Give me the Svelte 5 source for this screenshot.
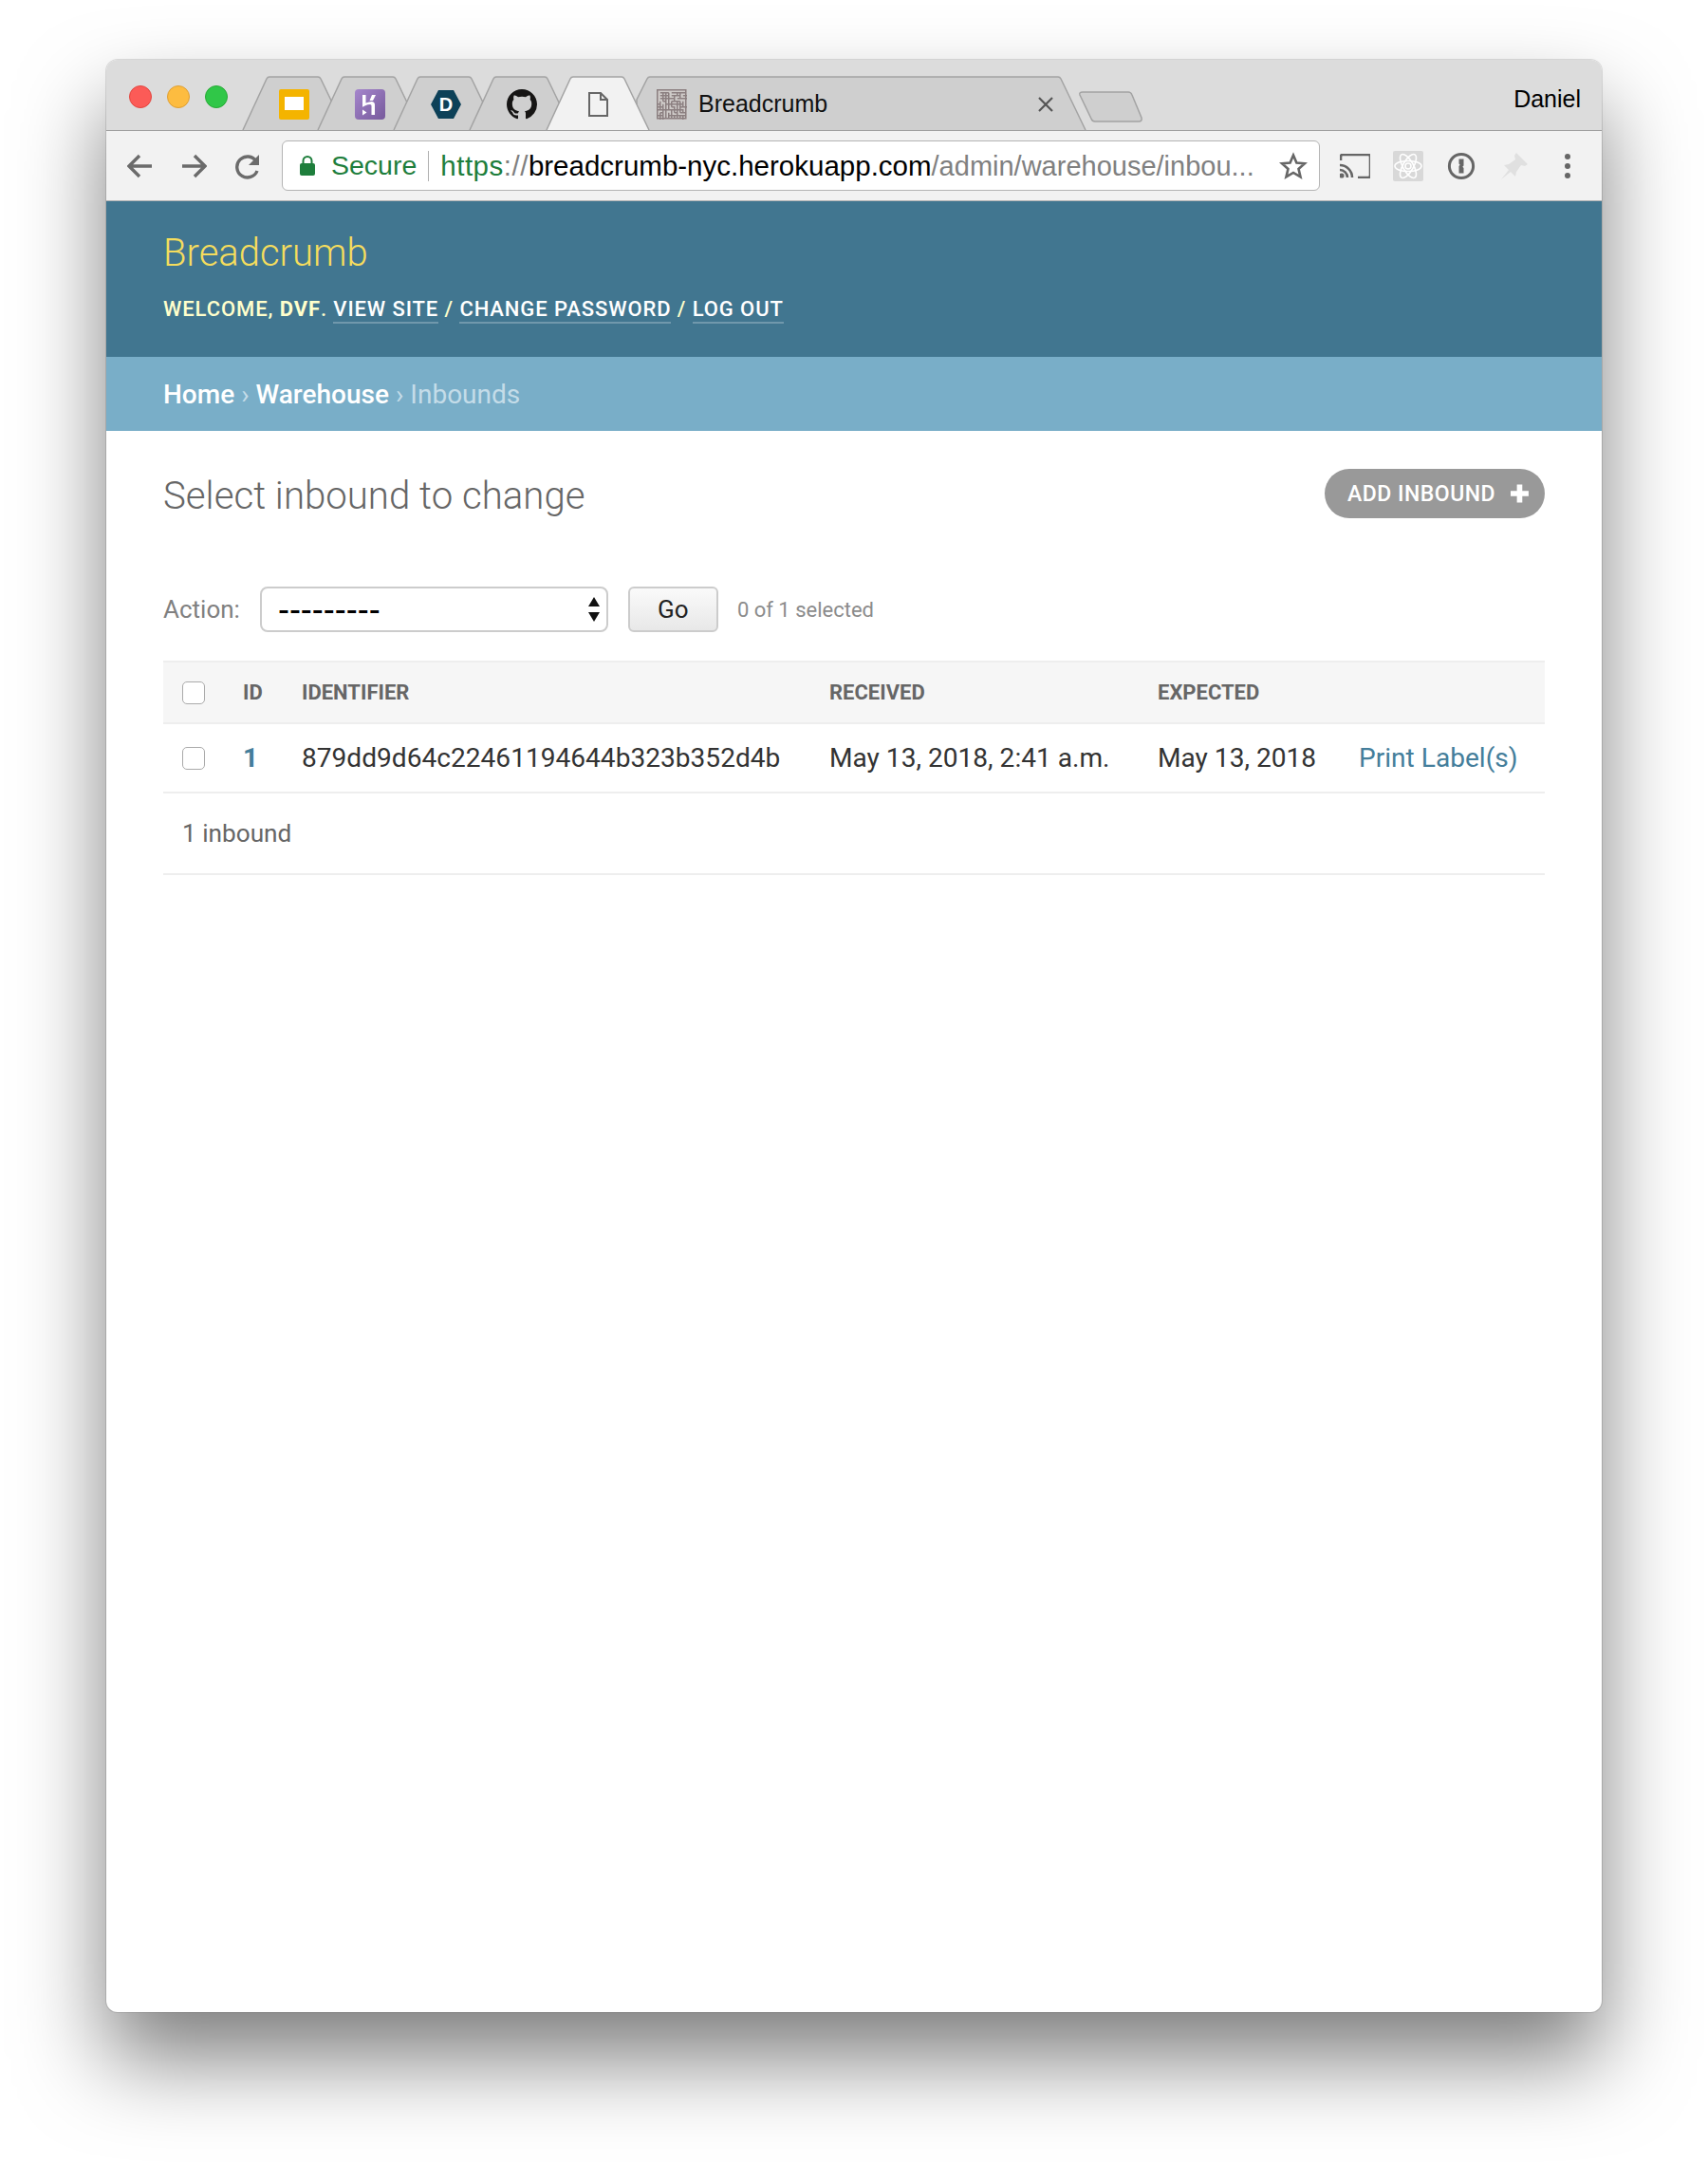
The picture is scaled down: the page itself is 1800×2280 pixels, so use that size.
<script>
	const rows = [
		{ id: '1', identifier: '879dd9d64c22461194644b323b352d4b', received: 'May 13, 2018, 2:41 a.m.', expected: 'May 13, 2018' }
	];

	const backgroundTabs = [
		{ x: 256, icon: 'slides' },
		{ x: 335, icon: 'heroku' },
		{ x: 415, icon: 'dash' },
		{ x: 495, icon: 'github' }
	];

	// maze favicon: walls picked by a small fixed generator, same every run
	const CELL = 3;
	const CELLS = 10;
	let seed = 7;
	function next() {
		seed = (seed * 137 + 59) % 251;
		return seed;
	}
	let maze = `M0.75 0.75H${CELLS * CELL + 0.75}V${CELLS * CELL + 0.75}H0.75Z`;
	for (let y = 1; y < CELLS; y++) {
		for (let x = 1; x < CELLS; x++) {
			const r = next() % 4;
			const px = x * CELL + 0.75;
			const py = y * CELL + 0.75;
			if (r === 0) maze += `M${px} ${py}h${CELL * 2}`;
			if (r === 1) maze += `M${px} ${py}v${CELL * 2}`;
			if (r === 2) maze += `M${px} ${py}h${CELL}v${CELL}`;
			if (r === 3) maze += `M${px} ${py}v${CELL}h${-CELL}`;
		}
	}
</script>

<div class="window">
	<div class="tabstrip">
		<svg class="tabs" width="1576" height="75" viewBox="112 63 1576 75">
			{#each backgroundTabs as tab}
				<path class="tab" d="M{tab.x} 137L{tab.x + 25} 83Q{tab.x + 26} 81 {tab.x + 28} 81H{tab.x + 79}Q{tab.x + 81} 81 {tab.x + 82} 83L{tab.x + 108} 137" />
			{/each}
			<path class="tab" d="M671 137V105L682 83Q683 81 685 81H1115Q1117 81 1118 83L1144 137" />
			<path class="tab" d="M1138 100Q1137 97 1141 97H1189Q1192 97 1193 100L1203 124Q1204 128 1200 128H1154Q1151 128 1150 125Z" />
			<path class="tab active" d="M576 137L601 83Q602 81 604 81H655Q657 81 658 83L684 137" />

			<rect x="294" y="94" width="32" height="32" rx="2" fill="#f4b400" />
			<rect x="300" y="102" width="20" height="14" fill="#fff" />

			<defs>
				<linearGradient id="heroku" x1="0" y1="0" x2="1" y2="1">
					<stop offset="0" stop-color="#a586cc" />
					<stop offset="1" stop-color="#775a9c" />
				</linearGradient>
			</defs>
			<rect x="374" y="94" width="32" height="32" rx="4" fill="url(#heroku)" />
			<path d="M382 100h3.500v8.500q4-1.500 6-1.500 3.500 0 3.500 3.500V121h-3.500v-9.500q0-1.500-1.500-1.500-2.500 0-5 1.300l-3 1.500zM392 100h4l-3 6h-3.500zM382 115.500l4.500 3-4.500 3z" fill="#fff" />

			<path d="M454 110L462 95H478L486 110L478 125H462Z" fill="#0d4158" />
			<text class="dash-letter" x="470" y="117">D</text>

			<svg x="534" y="94" width="32" height="32" viewBox="0 0 16 16">
				<path fill="#161514" d="M8 0C3.58 0 0 3.58 0 8c0 3.54 2.29 6.53 5.47 7.59.4.07.55-.17.55-.38 0-.19-.01-.82-.01-1.49-2.01.37-2.53-.49-2.69-.94-.09-.23-.48-.94-.82-1.13-.28-.15-.68-.52-.01-.53.63-.01 1.08.58 1.23.82.72 1.21 1.87.87 2.33.66.07-.52.28-.87.51-1.07-1.78-.2-3.64-.89-3.64-3.95 0-.87.31-1.59.82-2.15-.08-.2-.36-1.02.08-2.12 0 0 .67-.21 2.2.82.64-.18 1.32-.27 2-.27.68 0 1.36.09 2 .27 1.53-1.04 2.2-.82 2.2-.82.44 1.1.16 1.92.08 2.12.51.56.82 1.27.82 2.15 0 3.07-1.87 3.75-3.65 3.95.29.25.54.73.54 1.48 0 1.07-.01 1.93-.01 2.2 0 .21.15.46.55.38A8.013 8.013 0 0016 8c0-4.42-3.58-8-8-8z" />
			</svg>

			<path d="M621 98H633L640 105V122H621Z M633 98V105H640" fill="none" stroke="#666" stroke-width="2" />

			<svg x="692" y="94" width="32" height="32" viewBox="0 0 32 32">
				<rect width="32" height="32" fill="#cfcbc9" />
				<path d={maze} fill="none" stroke="#8b7f80" stroke-width="1.5" />
			</svg>

			<text class="tab-title" x="736" y="118">Breadcrumb</text>
			<path d="M1095 103L1109 117M1109 103L1095 117" stroke="#555" stroke-width="2.2" />
		</svg>
		<div class="lights">
			<span class="light red"></span>
			<span class="light yellow"></span>
			<span class="light green"></span>
		</div>
		<span class="profile">Daniel</span>
	</div>

	<div class="toolbar">
		<svg class="nav" width="27" height="26" viewBox="0 0 27 26"><path d="M26 13H3M13 2L2 13l11 11" /></svg>
		<svg class="nav" width="27" height="26" viewBox="0 0 27 26"><path d="M1 13h23M14 2l11 11-11 11" /></svg>
		<svg class="nav" width="28" height="28" viewBox="0 0 28 28">
			<path d="M23 19a11 11 0 1 1-1-10" />
			<path class="solid" d="M25 2v11H14z" />
		</svg>

		<div class="omnibox">
			<svg class="lock" width="16" height="21" viewBox="0 0 16 21">
				<rect y="8" width="16" height="13" rx="2" fill="#1e7e3c" />
				<path d="M3.500 9V5.500a4.500 4.500 0 0 1 9 0V9" fill="none" stroke="#1e7e3c" stroke-width="2" />
			</svg>
			<span class="secure">Secure</span>
			<span class="divider"></span>
			<span class="url"><span class="scheme">https</span><span class="colon">://</span><span class="host">breadcrumb-nyc.herokuapp.com</span><span class="path">/admin/warehouse/inbou...</span></span>
			<svg class="star" width="30" height="30" viewBox="0 0 30 30">
				<path d="M15 3.500l3.400 8 8.600.7-6.500 5.700 2 8.500-7.500-4.500-7.500 4.500 2-8.500L3 12.200l8.600-.7z" fill="none" stroke="#666" stroke-width="2.600" />
			</svg>
		</div>

		<div class="extensions">
			<svg width="32" height="26" viewBox="0 0 32 26">
				<path d="M1 7V3q0-2 2-2h27q2 0 2 2v20q0 2-2 2H19" fill="none" stroke="#666" stroke-width="2.600" />
				<path d="M0 12a13 13 0 0 1 13 13M0 17a8 8 0 0 1 8 8" fill="none" stroke="#666" stroke-width="2.600" />
				<circle cx="2" cy="23" r="2.600" fill="#666" />
			</svg>
			<svg width="32" height="32" viewBox="0 0 32 32">
				<rect width="32" height="32" rx="2" fill="#d8d8d8" />
				<g fill="none" stroke="#fff" stroke-width="1.600">
					<ellipse cx="16" cy="16" rx="14" ry="5.500" />
					<ellipse cx="16" cy="16" rx="14" ry="5.500" transform="rotate(60 16 16)" />
					<ellipse cx="16" cy="16" rx="14" ry="5.500" transform="rotate(120 16 16)" />
				</g>
				<circle cx="16" cy="16" r="3" fill="none" stroke="#fff" stroke-width="1.600" />
			</svg>
			<svg class="onepass" width="30" height="30" viewBox="0 0 30 30">
				<circle cx="15" cy="15" r="12.600" fill="none" stroke="#666" stroke-width="3" />
				<path d="M12.500 7.500h5v7l-1.200 1.200 1.200 1.300v5.500h-5v-7.500l1.200-1.200-1.200-1.300z" fill="#666" />
			</svg>
			<svg class="pin" width="32" height="30" viewBox="0 0 32 30">
				<path d="M19 1l12 12-3 2-4-1-5 7-1 5-5-5-10 8 8-10-5-5 5-1 7-5-1-4z" fill="#e0e0e0" />
			</svg>
			<svg class="menu" width="8" height="26" viewBox="0 0 8 26">
				<circle cx="4" cy="3" r="3" /><circle cx="4" cy="13" r="3" /><circle cx="4" cy="23" r="3" />
			</svg>
		</div>
	</div>

	<header class="banner">
		<h1 class="site-name">Breadcrumb</h1>
		<div class="user-tools">
			Welcome, <strong>dvf</strong>.
			<a href="#site">View site</a> /
			<a href="#password">Change password</a> /
			<a href="#logout">Log out</a>
		</div>
	</header>

	<nav class="crumbs">
		<a href="#home">Home</a><span class="sep">›</span><a href="#warehouse">Warehouse</a><span class="sep">›</span><span class="current">Inbounds</span>
	</nav>

	<main class="content">
		<div class="title-row">
			<h2>Select inbound to change</h2>
			<a class="add-btn" href="#add">
				Add inbound
				<svg width="20" height="20" viewBox="0 0 20 20"><path d="M7 0h6v7h7v6h-7v7H7v-7H0V7h7z" fill="#fff" /></svg>
			</a>
		</div>

		<div class="actions">
			<span class="action-label">Action:</span>
			<div class="select">
				<span>---------</span>
				<svg width="14" height="26" viewBox="0 0 14 26"><path d="M7 0l6 10H1zM7 26L1 16h12z" /></svg>
			</div>
			<button class="go">Go</button>
			<span class="counter">0 of 1 selected</span>
		</div>

		<table>
			<colgroup>
				<col class="col-check" /><col class="col-id" /><col class="col-identifier" /><col class="col-received" /><col class="col-expected" /><col class="col-print" />
			</colgroup>
			<thead>
				<tr>
					<th><span class="check"></span></th>
					<th>Id</th>
					<th>Identifier</th>
					<th>Received</th>
					<th>Expected</th>
					<th></th>
				</tr>
			</thead>
			<tbody>
				{#each rows as row}
					<tr>
						<td><span class="check"></span></td>
						<td><a class="id-link" href="#row">{row.id}</a></td>
						<td>{row.identifier}</td>
						<td>{row.received}</td>
						<td>{row.expected}</td>
						<td><a href="#print">Print Label(s)</a></td>
					</tr>
				{/each}
			</tbody>
		</table>

		<p class="paginator">1 inbound</p>
	</main>
</div>

<style>
	:global(body) {
		margin: 0;
		background: #fff;
	}

	.window {
		position: relative;
		box-sizing: border-box;
		width: 1576px;
		height: 2057px;
		margin: 63px 0 160px 112px;
		background: #fff;
		border-radius: 12px;
		font-family: Roboto, sans-serif;
		box-shadow: 0 50px 90px rgba(0, 0, 0, 0.5), 0 0 0 1px rgba(0, 0, 0, 0.12);
	}

	.tabstrip {
		position: relative;
		height: 74px;
		background: #dcdcdc;
		border-radius: 12px 12px 0 0;
		border-bottom: 1px solid #a0a0a0;
	}

	.tabs {
		position: absolute;
		left: 0;
		top: 0;
	}

	.tab {
		fill: #cfcfcf;
		stroke: #a3a3a3;
		stroke-width: 1.5;
	}

	.tab.active {
		fill: #f2f2f2;
	}

	.dash-letter {
		font: 700 20px "Liberation Sans", sans-serif;
		fill: #fff;
		text-anchor: middle;
	}

	.tab-title {
		font: 25px "Liberation Sans", sans-serif;
		fill: #111;
	}

	.lights {
		position: absolute;
		left: 24px;
		top: 27px;
		display: flex;
		gap: 16px;
	}

	.light {
		box-sizing: border-box;
		width: 24px;
		height: 24px;
		border-radius: 50%;
		border: 1px solid;
	}

	.red { background: #fc5b57; border-color: #e2463f; }
	.yellow { background: #fdbc40; border-color: #de9f34; }
	.green { background: #30c748; border-color: #27aa35; }

	.profile {
		position: absolute;
		right: 22px;
		top: 27px;
		font: 25px "Liberation Sans", sans-serif;
		color: #000;
	}

	.toolbar {
		display: flex;
		align-items: center;
		box-sizing: border-box;
		height: 74px;
		padding-left: 22px;
		background: #f2f2f2;
		border-bottom: 1px solid #b4b4b4;
	}

	.nav {
		flex: none;
		margin-right: 30px;
		fill: none;
		stroke: #6b6b6b;
		stroke-width: 3.4;
	}

	.nav .solid {
		fill: #6b6b6b;
		stroke: none;
	}

	.nav:nth-child(3) {
		margin-right: 21px;
	}

	.omnibox {
		display: flex;
		align-items: center;
		box-sizing: border-box;
		width: 1094px;
		height: 53px;
		padding-left: 18px;
		background: #fff;
		border: 1.5px solid #b4b4b4;
		border-radius: 6px;
		font-family: "Liberation Sans", sans-serif;
		white-space: nowrap;
	}

	.secure {
		margin-left: 17px;
		font-size: 28.5px;
		color: #1e7e3c;
	}

	.divider {
		width: 1px;
		height: 32px;
		margin: 0 12px;
		background: #b0b0b0;
	}

	.url {
		flex: 1;
		font-size: 29.5px;
		color: #000;
	}

	.scheme {
		color: #1e7e3c;
		letter-spacing: 0.5px;
	}

	.colon {
		color: #808080;
		letter-spacing: 0.5px;
	}

	.path {
		color: #808080;
		font-size: 29px;
	}

	.star {
		margin-right: 12px;
	}

	.extensions {
		display: flex;
		align-items: center;
		gap: 24px;
		margin-left: 21px;
	}

	.onepass {
		margin-left: 1px;
	}

	.menu {
		fill: #666;
		margin-left: 13px;
	}

	.banner {
		box-sizing: border-box;
		height: 164px;
		padding: 30px 60px 0;
		background: #417690;
		color: #ffc;
	}

	.site-name {
		margin: 0;
		font-size: 40px;
		line-height: 50px;
		font-weight: 300;
		color: #f5dd5d;
	}

	.user-tools {
		margin-top: 19px;
		font-size: 22px;
		font-weight: 500;
		line-height: 30px;
		letter-spacing: 0.9px;
		text-transform: uppercase;
		white-space: nowrap;
	}

	.user-tools a {
		color: #fff;
		text-decoration: none;
		border-bottom: 2px solid rgba(255, 255, 255, 0.25);
		padding-bottom: 1px;
	}

	.crumbs {
		box-sizing: border-box;
		height: 78px;
		padding: 1px 60px 0;
		display: flex;
		align-items: center;
		background: #79aec8;
		font-size: 28px;
		color: #c4dce8;
	}

	.crumbs a {
		color: #fff;
		text-decoration: none;
		font-weight: 500;
	}

	.sep {
		margin: 0 7px;
	}

	.content {
		padding: 40px 60px 0;
	}

	.title-row {
		display: flex;
		justify-content: space-between;
		align-items: flex-start;
	}

	h2 {
		margin: 1px 0 0;
		font-size: 40.2px;
		line-height: 55px;
		font-weight: 300;
		color: #666;
	}

	.add-btn {
		display: flex;
		align-items: center;
		gap: 16px;
		box-sizing: border-box;
		width: 232px;
		height: 52px;
		padding: 0 17px 0 24px;
		border-radius: 26px;
		background: #999;
		color: #fff;
		font-size: 23px;
		font-weight: 500;
		letter-spacing: 0.5px;
		text-transform: uppercase;
		text-decoration: none;
		white-space: nowrap;
	}

	.actions {
		display: flex;
		align-items: center;
		margin-top: 68px;
		height: 48px;
		font-size: 26px;
	}

	.action-label {
		color: #808080;
	}

	.select {
		display: flex;
		align-items: center;
		justify-content: space-between;
		box-sizing: border-box;
		width: 367px;
		height: 48px;
		margin-left: 21px;
		padding: 0 6px 0 17px;
		background: #fff;
		border: 2px solid #ccc;
		border-radius: 8px;
		color: #000;
		font: 36px "Liberation Sans", sans-serif;
	}

	.select svg {
		fill: #111;
	}

	.go {
		width: 95px;
		height: 48px;
		margin-left: 21px;
		border: 2px solid #ccc;
		border-radius: 6px;
		background: linear-gradient(#fafafa, #e8e8e8);
		color: #222;
		font: 26px Roboto, sans-serif;
	}

	.counter {
		margin-left: 20px;
		font-size: 22px;
		color: #8c8c8c;
	}

	table {
		width: 1456px;
		margin-top: 30px;
		border-collapse: collapse;
		table-layout: fixed;
	}

	.col-check { width: 68px; }
	.col-id { width: 62px; }
	.col-identifier { width: 556px; }
	.col-received { width: 346px; }
	.col-expected { width: 212px; }
	.col-print { width: 212px; }

	th {
		box-sizing: border-box;
		height: 65px;
		padding: 0 0 0 16px;
		text-align: left;
		background: #f6f6f6;
		border-top: 2px solid #eee;
		border-bottom: 2px solid #eee;
		color: #666;
		font-size: 22px;
		font-weight: 700;
		text-transform: uppercase;
	}

	td {
		box-sizing: border-box;
		height: 73px;
		padding: 0 0 0 16px;
		border-bottom: 2px solid #eee;
		color: #333;
		font-size: 28.1px;
		white-space: nowrap;
	}

	th:first-child,
	td:first-child {
		padding-left: 20px;
	}

	td a {
		color: #447e9b;
		text-decoration: none;
	}

	.id-link {
		font-weight: 700;
	}

	.check {
		display: block;
		box-sizing: border-box;
		width: 24px;
		height: 24px;
		background: #fff;
		border: 1.5px solid #aaa;
		border-radius: 5px;
	}

	.paginator {
		box-sizing: border-box;
		height: 86px;
		margin: 0;
		padding-left: 20px;
		line-height: 84px;
		border-bottom: 2px solid #eee;
		color: #666;
		font-size: 26.2px;
	}
</style>
